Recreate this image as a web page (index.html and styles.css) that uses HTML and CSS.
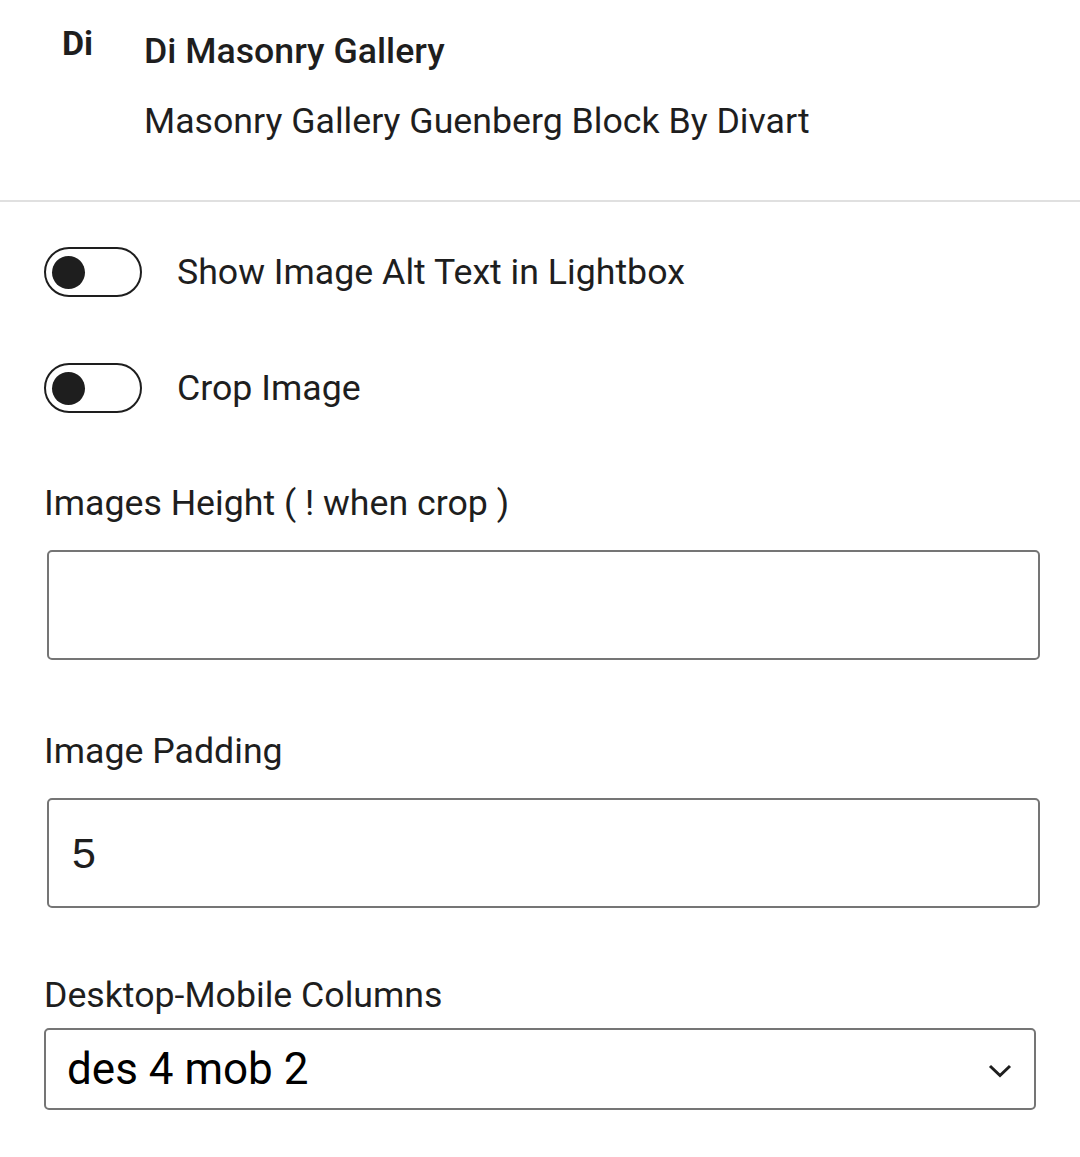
FILE: index.html
```html
<!DOCTYPE html>
<html lang="en">
<head>
<meta charset="utf-8">
<title>Di Masonry Gallery</title>
<link rel="stylesheet" href="styles.css">
</head>
<body>
<div class="card">
  <div class="card-icon">Di</div>
  <div class="card-content">
    <h2 class="card-title">Di Masonry Gallery</h2>
    <p class="card-desc">Masonry Gallery Guenberg Block By Divart</p>
  </div>
</div>
<div class="panel">
  <div class="toggle-row">
    <span class="toggle"><span class="knob"></span></span>
    <span class="toggle-label">Show Image Alt Text in Lightbox</span>
  </div>
  <div class="toggle-row second">
    <span class="toggle"><span class="knob"></span></span>
    <span class="toggle-label">Crop Image</span>
  </div>
  <div class="field first-field">
    <label class="field-label">Images Height ( ! when crop )</label>
    <div class="text-input"></div>
  </div>
  <div class="field">
    <label class="field-label">Image Padding</label>
    <div class="text-input"><span class="input-value">5</span></div>
  </div>
  <div class="field select-field">
    <label class="field-label">Desktop-Mobile Columns</label>
    <div class="select">
      <span class="select-value">des 4 mob 2</span>
      <svg class="chevron" width="24" height="14" viewBox="0 0 24 14"><path d="M2 2 L12 11.5 L22 2" fill="none" stroke="#1e1e1e" stroke-width="3"/></svg>
    </div>
  </div>
</div>
</body>
</html>
```

FILE: styles.css
```css
* { box-sizing: border-box; }
html, body {
  margin: 0;
  padding: 0;
  background: #ffffff;
}
body {
  font-family: Roboto, "Liberation Sans", sans-serif;
  color: #1e1e1e;
  width: 1080px;
}
.card {
  display: flex;
  padding: 31px 0 55px 62px;
  border-bottom: 2px solid #e0e0e0;
}
.card-icon {
  width: 82px;
  font-weight: 700;
  font-size: 34px;
  line-height: 40px;
  margin-top: -8px;
}
.card-content { flex: 1; }
.card-title {
  margin: 0;
  font-size: 35.7px;
  line-height: 40px;
  font-weight: 500;
}
.card-desc {
  margin: 26px 0 0;
  font-size: 35.7px;
  line-height: 48px;
  font-weight: 400;
}
.panel {
  padding: 45px 40px 0 44px;
}
.toggle-row {
  display: flex;
  align-items: center;
  gap: 35px;
  height: 50px;
}
.toggle-row.second { margin-top: 66px; }
.toggle {
  width: 98px;
  height: 50px;
  border: 2.7px solid #1e1e1e;
  border-radius: 25px;
  display: flex;
  align-items: center;
  padding-left: 6px;
  flex: none;
}
.knob {
  width: 33px;
  height: 33px;
  border-radius: 50%;
  background: #1e1e1e;
}
.toggle-label {
  font-size: 35.7px;
  line-height: 50px;
}
.field { margin-top: 67px; }
.field.first-field { margin-top: 66px; }
.field-label {
  display: block;
  font-size: 35.7px;
  line-height: 48px;
}
.text-input {
  margin: 23px 0 0 3px;
  width: 993px;
  height: 110px;
  border: 2.7px solid #757575;
  border-radius: 5px;
  display: flex;
  align-items: center;
  padding-left: 23px;
}
.input-value {
  font-size: 43px;
  font-family: "Liberation Sans", Arial, sans-serif;
  line-height: 50px;
}
.select-field { margin-top: 63px; }
.select-field .field-label { margin-bottom: 9px; }
.select {
  width: 992px;
  height: 82px;
  border: 2.7px solid #757575;
  border-radius: 5px;
  display: flex;
  align-items: center;
  justify-content: space-between;
  padding: 0 22px 0 21px;
}
.select-value {
  font-size: 44px;
  line-height: 50px;
  color: #000;
}
.chevron { display: block; margin-top: 4px; }
```
